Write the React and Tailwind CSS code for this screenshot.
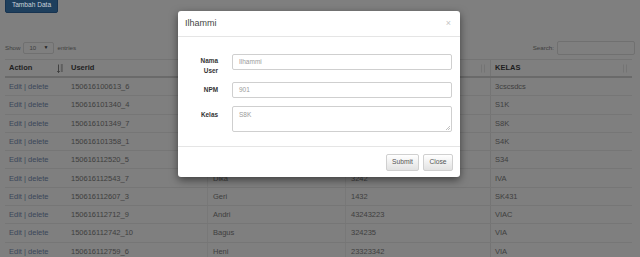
import React from 'react';

const rows = [
  ['150616100613_6', 'Ilhammi', '901', '3cscsdcs'],
  ['150616101340_4', 'Rina', '1234', 'S1K'],
  ['150616101349_7', 'Budi', '5678', 'S8K'],
  ['150616101358_1', 'Sari', '3456', 'S4K'],
  ['150616112520_5', 'Tono', '7890', 'S34'],
  ['150616112543_7', 'Dika', '3242', 'IVA'],
  ['150616112607_3', 'Geri', '1432', 'SK431'],
  ['150616112712_9', 'Andri', '43243223', 'VIAC'],
  ['150616112742_10', 'Bagus', '324235', 'VIA'],
  ['150616112759_6', 'Heni', '23323342', 'VIA'],
];

const cols = 'grid grid-cols-[61px_141px_138px_145px_142px]';

const SortIcon = ({ active }) => (
  <svg width="6" height="9" viewBox="0 0 6 9" className="shrink-0">
    {active ? (
      <g fill="none" stroke="#3a3a3a" strokeWidth="0.9">
        <path d="M1.5 0.5v8M0.3 7l1.2 1.5L2.7 7" />
        <path d="M3.8 1h2M3.8 3h2M3.8 5h2M3.8 7h2" />
      </g>
    ) : (
      <g fill="none" stroke="#737373" strokeWidth="0.9">
        <path d="M1.5 0.5v8M4.5 0.5v8" />
      </g>
    )}
  </svg>
);

export default function App() {
  return (
    <div className="relative h-[257px] w-[640px] overflow-hidden bg-[#7f7f7f] font-['Liberation_Sans',Arial,sans-serif] text-[#3e3e3e]">
      <div className="px-[5px]">
        <div className="mt-[-3px] flex h-[16px] w-[53px] items-center justify-center rounded-[2px] border border-[#173350] bg-[#1e3f5d] text-[6.6px] text-[#c8d1da]">
          Tambah Data
        </div>

        <div className="mt-[28px] flex h-[14px] items-center justify-between text-[6.2px]">
          <div className="flex items-center gap-[3px]">
            <span>Show</span>
            <div className="flex h-[12px] w-[31px] items-center justify-between rounded-[2px] border border-[#707070] px-[5px] text-[6px]">
              <span>10</span>
              <span className="text-[5px] text-[#222]">▼</span>
            </div>
            <span>entries</span>
          </div>
          <div className="flex items-center gap-[3px]">
            <span>Search:</span>
            <div className="h-[14px] w-[78px] rounded-[2px] border border-[#707070]" />
          </div>
        </div>

        <div className="mt-[4px] w-[627px] text-[7.5px]">
          <div className={`${cols} h-[19px] border-y border-t-[#747474] border-b-[#6a6a6a] border-b-2 font-bold text-[#1e1e1e]`}>
            <div className="flex items-center justify-between pl-[4px] pr-[3px]">
              <span>Action</span>
              <SortIcon active />
            </div>
            <div className="flex items-center pl-[5px]">Userid</div>
            <div className="flex items-center justify-between border-l border-[#747474] pl-[5px] pr-[4px]">
              <span>Nama</span>
              <SortIcon />
            </div>
            <div className="flex items-center justify-between border-l border-[#747474] pl-[5px] pr-[4px]">
              <span>NPM</span>
              <SortIcon />
            </div>
            <div className="flex items-center justify-between border-l border-[#747474] pl-[4px] pr-[4px]">
              <span>KELAS</span>
              <SortIcon />
            </div>
          </div>
          {rows.map((r) => (
            <div key={r[0]} className={`${cols} h-[18.3px] border-b border-[#767676]`}>
              <div className="flex items-center pl-[4px] text-[#3a4659]">Edit | delete</div>
              <div className="flex items-center pl-[5px]">{r[0]}</div>
              <div className="flex items-center border-l border-[#787878] pl-[5px]">{r[1]}</div>
              <div className="flex items-center border-l border-[#787878] pl-[5px]">{r[2]}</div>
              <div className="flex items-center border-l border-[#747474] pl-[4px]">{r[3]}</div>
            </div>
          ))}
        </div>
      </div>

      <div className="absolute left-[178px] top-[11px] w-[282px] rounded-[3px] bg-white shadow-[0_3px_9px_rgba(0,0,0,0.5)]">
        <div className="flex h-[26px] items-center justify-between border-b border-[#e5e5e5] pl-[7px] pr-[9px]">
          <span className="text-[9px] text-[#444]">Ilhammi</span>
          <span className="text-[9px] leading-none text-[#c4c4c4]">×</span>
        </div>

        <div className="pb-[14px] pt-[17px]">
          <div className="flex h-[16px] pr-[8px]">
            <div className="w-[40px] shrink-0 pt-[2px] text-right text-[6.4px] font-bold leading-[10px] text-[#333]">
              Nama<br />User
            </div>
            <div className="ml-[14px] flex flex-1 items-center rounded-[2px] border border-[#cfcfcf] pl-[6px] text-[6.5px] text-[#9a9a9a]">
              Ilhammi
            </div>
          </div>
          <div className="mt-[12px] flex h-[16px] pr-[8px]">
            <div className="flex w-[40px] shrink-0 items-center justify-end text-[6.4px] font-bold text-[#333]">NPM</div>
            <div className="ml-[14px] flex flex-1 items-center rounded-[2px] border border-[#cfcfcf] pl-[6px] text-[6.5px] text-[#9a9a9a]">
              901
            </div>
          </div>
          <div className="mt-[8px] flex h-[26px] pr-[8px]">
            <div className="w-[40px] shrink-0 pt-[4px] text-right text-[6.4px] font-bold text-[#333]">Kelas</div>
            <div className="relative ml-[14px] flex-1 rounded-[2px] border border-[#cfcfcf] pl-[6px] pt-[3px] text-[6.5px] text-[#9a9a9a]">
              S8K
              <svg width="4" height="4" viewBox="0 0 4 4" className="absolute bottom-[1px] right-[1px]">
                <path d="M4 0L0 4M4 2L2 4" stroke="#999" strokeWidth="0.6" />
              </svg>
            </div>
          </div>
        </div>

        <div className="flex justify-end gap-[4px] border-t border-[#e5e5e5] pb-[6px] pr-[7px] pt-[7px]">
          <div className="flex h-[17px] w-[33px] items-center justify-center rounded-[2px] border border-[#d0d0d0] bg-gradient-to-b from-white to-[#e2e2e2] text-[6.7px] text-[#555]">
            Submit
          </div>
          <div className="flex h-[17px] w-[30px] items-center justify-center rounded-[2px] border border-[#d0d0d0] bg-gradient-to-b from-white to-[#e2e2e2] text-[6.7px] text-[#555]">
            Close
          </div>
        </div>
      </div>
    </div>
  );
}
